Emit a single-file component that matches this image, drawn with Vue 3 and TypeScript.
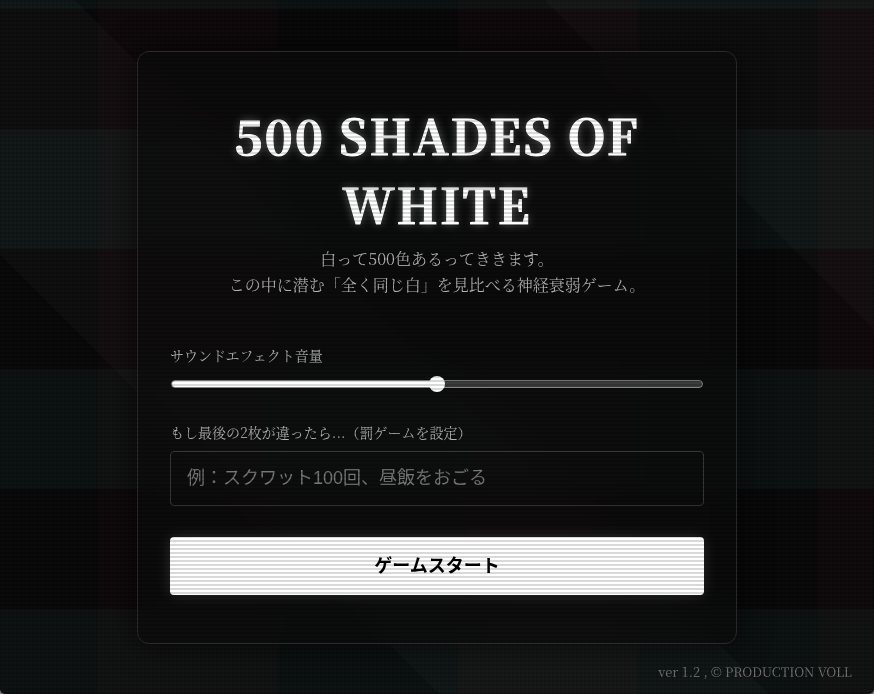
<script setup lang="ts">
import { ref } from 'vue'

const volume = ref<number>(50)
const penalty = ref<string>('')
</script>

<template>
  <div class="screen">
    <main class="card">
      <header class="intro">
        <h1>500 SHADES OF WHITE</h1>
        <p>白って500色あるってききます。<br />この中に潜む「全く同じ白」を見比べる神経衰弱ゲーム。</p>
      </header>
      <form class="settings" @submit.prevent>
        <div class="field">
          <label for="volume">サウンドエフェクト音量</label>
          <input id="volume" v-model.number="volume" class="slider" type="range" min="0" max="100" :style="{ '--level': volume + '%' }" />
        </div>
        <div class="field penalty">
          <label for="penalty">もし最後の2枚が違ったら...（罰ゲームを設定）</label>
          <input id="penalty" v-model="penalty" class="text" type="text" placeholder="例：スクワット100回、昼飯をおごる" />
        </div>
        <button type="submit">ゲームスタート</button>
      </form>
    </main>
    <footer>ver 1.2 , © PRODUCTION VOLL</footer>
  </div>
</template>

<style>
body {
  background: #777;
}
</style>

<style scoped>
.screen {
  position: relative;
  display: flex;
  min-height: 100vh;
  box-sizing: border-box;
  align-items: center;
  justify-content: center;
  overflow: hidden;
  padding: 32px;
  border-radius: 0 0 5px 5px;
  color: #fff;
  font-family: "Noto Serif CJK JP", "Noto Serif JP", "Noto Serif", "Noto Sans CJK JP", serif;
  background:
    repeating-linear-gradient(90deg, rgba(0, 0, 0, 0.1) 0 2px, transparent 2px 4px),
    linear-gradient(45deg, transparent 28%, rgba(255, 255, 255, 0.024) 28%, rgba(255, 255, 255, 0.024) 49%, transparent 49%, transparent 79%, rgba(255, 255, 255, 0.024) 79%),
    repeating-linear-gradient(90deg, transparent 0 98px, rgba(255, 40, 50, 0.026) 98px 278px, transparent 278px 360px),
    repeating-linear-gradient(180deg, rgba(80, 255, 210, 0.04) 0 9px, transparent 9px 129px, rgba(80, 255, 210, 0.04) 129px 240px),
    #0a0a0b;
}

.screen::after {
  content: "";
  position: absolute;
  inset: 0;
  pointer-events: none;
  background: repeating-linear-gradient(0deg, rgba(0, 0, 0, 0.15) 0 2px, transparent 2px 4px);
}

.card {
  width: 100%;
  max-width: 600px;
  box-sizing: border-box;
  padding: 48px 32px;
  border: 1px solid #2b2b2b;
  border-radius: 12px;
  background: rgba(12, 12, 12, 0.7);
  backdrop-filter: blur(10px);
  box-shadow: 0 0 32px rgba(0, 0, 0, 0.6);
}

.intro {
  text-align: center;
}

h1 {
  margin: 0;
  font-size: 48px;
  font-weight: 700;
  line-height: 69px;
  letter-spacing: 2px;
  -webkit-text-stroke: 1px #fff;
  text-shadow: 0 0 10px rgba(255, 255, 255, 0.4);
}

p {
  margin: 8px 0 46px;
  color: #b3b3b3;
  font-size: 16px;
  line-height: 26px;
}

.field {
  display: flex;
  flex-direction: column;
  gap: 8px;
}

label {
  color: #b3b3b3;
  font-size: 14px;
  line-height: 22px;
}

.slider {
  height: 20px;
  margin: 0 1px;
  appearance: none;
  background: transparent;
}

.slider::-webkit-slider-runnable-track {
  height: 8px;
  box-sizing: border-box;
  border: 1px solid #858585;
  border-radius: 4px;
  background: linear-gradient(90deg, #fff var(--level), #3b3b3b var(--level));
}

.slider::-webkit-slider-thumb {
  width: 16px;
  height: 16px;
  margin-top: -5px;
  appearance: none;
  border-radius: 50%;
  background: #fff;
}

.penalty {
  margin-top: 27px;
}

.text {
  width: 100%;
  height: 55px;
  box-sizing: border-box;
  padding: 0 16px;
  border: 1px solid #383838;
  border-radius: 4px;
  background: transparent;
  color: #fff;
  font-family: "Liberation Sans", "Noto Sans CJK JP", sans-serif;
  font-size: 18px;
}

.text::placeholder {
  color: #777;
}

button {
  width: 100%;
  height: 58px;
  margin-top: 31px;
  padding: 0 0 4px;
  border: 0;
  border-radius: 4px;
  background: #fff;
  box-shadow: 0 0 15px rgba(255, 255, 255, 0.15);
  color: #000;
  font-family: "Liberation Sans", "Noto Sans CJK JP", sans-serif;
  font-size: 18px;
  font-weight: 700;
}

footer {
  position: absolute;
  right: 22px;
  bottom: 12px;
  color: #777;
  font-size: 13px;
  line-height: 20px;
}
</style>
